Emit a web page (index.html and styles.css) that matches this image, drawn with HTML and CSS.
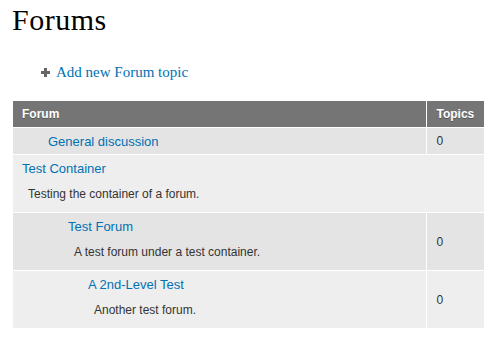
FILE: index.html
```html
<!DOCTYPE html>
<html lang="en">
<head>
  <meta charset="UTF-8" />
  <title>Forums</title>
  <link rel="stylesheet" href="styles.css">
</head>
<body>

  <h1 class="page-title">Forums</h1>

  <!-- Action links -->
  <ul class="action-links">
    <li>
      <span class="plus-icon">
        <svg width="9" height="9" viewBox="0 0 9 9"><path d="M3 0h3v3h3v3H6v3H3V6H0V3h3z" fill="#666"/></svg>
      </span>
      <a href="#">Add new Forum topic</a>
    </li>
  </ul>

  <!-- Forum list -->
  <table class="forum-list">
    <thead>
      <tr>
        <th>Forum</th>
        <th class="topics">Topics</th>
      </tr>
    </thead>
    <tbody>
      <tr class="odd">
        <td>
          <div class="name depth-0"><a href="#">General discussion</a></div>
        </td>
        <td class="topics">0</td>
      </tr>
      <tr class="even container">
        <td colspan="2">
          <div class="name"><a href="#">Test Container</a></div>
          <div class="description">Testing the container of a forum.</div>
        </td>
      </tr>
      <tr class="odd">
        <td>
          <div class="name depth-1"><a href="#">Test Forum</a></div>
          <div class="description depth-1">A test forum under a test container.</div>
        </td>
        <td class="topics">0</td>
      </tr>
      <tr class="even">
        <td>
          <div class="name depth-2"><a href="#">A 2nd-Level Test</a></div>
          <div class="description depth-2">Another test forum.</div>
        </td>
        <td class="topics">0</td>
      </tr>
    </tbody>
  </table>

</body>
</html>
```

FILE: styles.css
```css
* {
  box-sizing: border-box;
  margin: 0;
  padding: 0;
}

body {
  font-family: 'Liberation Sans', Arial, sans-serif;
  background: #fff;
  color: #333;
  padding: 2px 0 0 13px;
  overflow: hidden;
}

.page-title {
  font-family: 'Liberation Serif', Georgia, serif;
  font-weight: normal;
  font-size: 30px;
  line-height: 36px;
  letter-spacing: 0.5px;
  color: #000;
  margin-left: -1px;
}

.action-links {
  list-style: none;
  margin: 24px 0 19px 28px;
}

.action-links li {
  display: flex;
  align-items: center;
  gap: 6px;
  font-family: 'Liberation Serif', Georgia, serif;
  font-size: 15px;
  line-height: 20px;
}

.plus-icon {
  display: flex;
  margin-top: 1px;
}

a {
  color: #0071b3;
  text-decoration: none;
}

.forum-list {
  width: 471px;
  border-collapse: collapse;
  font-size: 13px;
  line-height: 17px;
}

.forum-list th {
  background: #757575;
  color: #fff;
  font-size: 12px;
  font-weight: bold;
  text-align: left;
  text-shadow: 0 1px 0 rgba(0, 0, 0, 0.3);
  padding: 5px 9px 4px;
  border-bottom: 1px solid #fff;
}

.forum-list td {
  padding: 5px 9px 4px;
  border-bottom: 1px solid #fff;
  vertical-align: middle;
}

.forum-list .topics {
  width: 58px;
  padding-left: 10px;
  border-left: 1px solid #fff;
  font-size: 12px;
}

.forum-list tr.odd td {
  background: #e4e4e4;
}

.forum-list tr.even td {
  background: #eeeeee;
}

.name.depth-0 { padding-left: 26px; }
.name.depth-1 { padding-left: 46px; }
.name.depth-2 { padding-left: 66px; }

.description {
  font-size: 12px;
  color: #333;
  margin: 9px 0 5px 6px;
}

.description.depth-1 { padding-left: 46px; }
.description.depth-2 { padding-left: 66px; }
```
